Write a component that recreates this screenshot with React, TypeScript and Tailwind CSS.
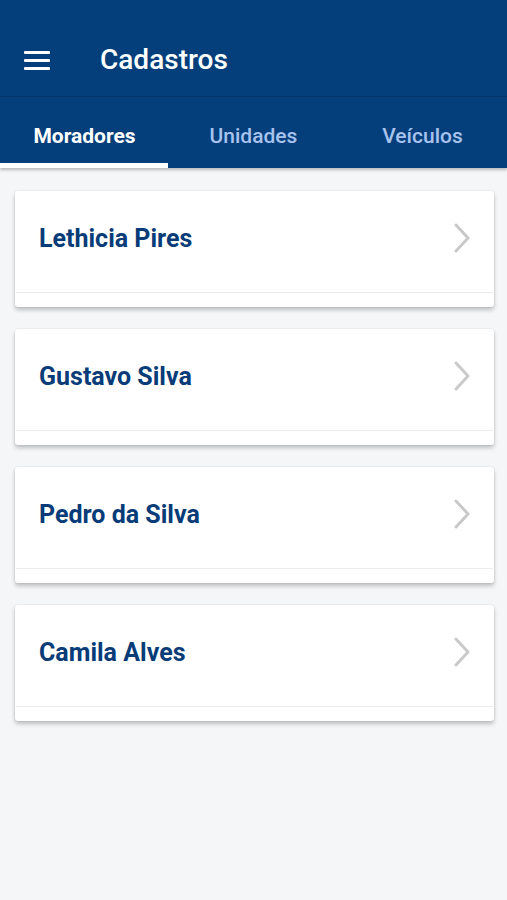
import React from "react";

const names = ["Lethicia Pires", "Gustavo Silva", "Pedro da Silva", "Camila Alves"];

export default function App() {
  return (
    <div className="w-[507px] h-[900px] bg-[#f5f6f8] flex flex-col" style={{ fontFamily: "Roboto, 'Liberation Sans', sans-serif" }}>
      <div className="bg-[#043f7c] shadow-[0_2px_3px_rgba(0,0,0,0.25)] relative z-10">
        <div className="h-[97px] flex items-center border-b border-[#03376b] pt-[24px]">
          <div className="pl-[24px] pr-[50px] flex flex-col gap-[5px]">
            <div className="w-[26px] h-[3px] bg-white rounded-[1px]" />
            <div className="w-[26px] h-[3px] bg-white rounded-[1px]" />
            <div className="w-[26px] h-[3px] bg-white rounded-[1px]" />
          </div>
          <span className="text-white text-[28px] font-medium">Cadastros</span>
        </div>
        <div className="h-[71px] flex">
          <div className="w-[169px] flex flex-col">
            <div className="flex-1 flex items-center justify-center text-white text-[21px] font-bold pt-[13px]">Moradores</div>
            <div className="h-[5px] bg-white mr-[1px]" />
          </div>
          <div className="w-[169px] flex items-center justify-center text-[#a7c3ee] text-[21px] font-medium pt-[9px]">Unidades</div>
          <div className="w-[169px] flex items-center justify-center text-[#a7c3ee] text-[21px] font-medium pt-[9px]">Veículos</div>
        </div>
      </div>
      <div className="flex flex-col gap-[22px] pt-[23px] pl-[15px] pr-[13px]">
        {names.map((n) => (
          <div key={n} className="bg-white rounded-[3px] h-[116px] flex flex-col shadow-[0_3px_4px_rgba(0,0,0,0.22),0_0_2px_rgba(0,0,0,0.12)]">
            <div className="h-[102px] flex items-center justify-between pl-[23px] pr-[22px] border-b border-[#ebebeb] mx-[1px]">
              <span className="text-[#073c78] text-[25px] font-bold pb-[6px]">{n}</span>
              <svg width="18" height="30" viewBox="0 0 18 30" className="mb-[8px]">
                <path d="M3 2 L15 15 L3 28" fill="none" stroke="#c9c9c9" strokeWidth="3" strokeLinecap="round" strokeLinejoin="round" />
              </svg>
            </div>
          </div>
        ))}
      </div>
    </div>
  );
}
